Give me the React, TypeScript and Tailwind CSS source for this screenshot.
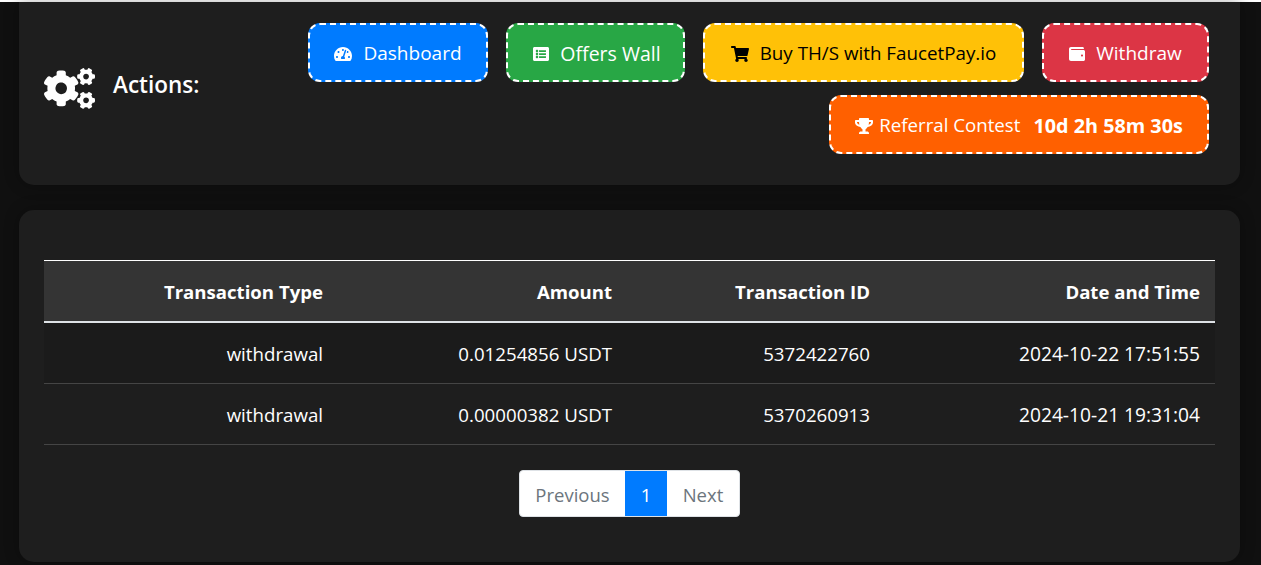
import { FaCogs, FaListAlt, FaShoppingCart, FaTachometerAlt, FaTrophy, FaWallet } from 'react-icons/fa';
import type { ReactNode } from 'react';

const rows = [
  { type: 'withdrawal', amount: '0.01254856 USDT', id: '5372422760', date: '2024-10-22 17:51:55', first: true },
  { type: 'withdrawal', amount: '0.00000382 USDT', id: '5370260913', date: '2024-10-21 19:31:04', first: false },
];

const ActionButton = ({ className, children }: { className: string; children: ReactNode }) => (
  <a className={`flex h-[59px] items-center justify-center rounded-[12px] border-2 border-dashed border-white pt-[2px] ${className}`}>
    {children}
  </a>
);

export default function App() {
  return (
    <div className="h-[565px] overflow-hidden bg-[#101010] font-['Open_Sans','Noto_Sans',sans-serif] text-[19px] text-white">
      <div className="h-[2px] bg-white" />
      <div className="mr-[21px] ml-[19px] flex h-[183px] rounded-b-[15px] bg-[#1e1e1e] pr-[31px] pl-[25px] shadow-[0_0_15px_rgba(0,0,0,0.3)]">
        <div className="flex w-[240px] shrink-0 items-center pb-[18px]">
          <FaCogs className="mt-[8px] text-[51px]" />
          <span className="ml-[18px] text-[22.5px] font-semibold">Actions:</span>
        </div>
        <div className="flex flex-1 flex-wrap content-start justify-end gap-x-[18px] gap-y-[13px] pt-[21px]">
          <ActionButton className="w-[180px] bg-[#007bff]">
            <FaTachometerAlt className="mr-[11px] text-[18px]" />
            Dashboard
          </ActionButton>
          <ActionButton className="w-[179px] bg-[#28a745]">
            <FaListAlt className="mr-[11px] ml-[3px] text-[16px]" />
            <span className="text-[19.5px]">Offers Wall</span>
          </ActionButton>
          <ActionButton className="w-[321px] bg-[#ffc107] text-black">
            <FaShoppingCart className="mr-[11px] text-[18px]" />
            <span className="text-[18.8px]">Buy TH/S with FaucetPay.io</span>
          </ActionButton>
          <ActionButton className="w-[167px] bg-[#dc3545]">
            <FaWallet className="mr-[11px] text-[16px]" />
            Withdraw
          </ActionButton>
          <ActionButton className="w-[380px] bg-[#ff6000]">
            <FaTrophy className="mr-[6px] text-[18px]" />
            <span className="text-[18.7px]">Referral Contest</span>
            <b className="ml-[13px] text-[19.8px] font-bold">10d 2h 58m 30s</b>
          </ActionButton>
        </div>
      </div>
      <div className="mt-[25px] mr-[21px] ml-[19px] flex h-[352px] flex-col rounded-[15px] bg-[#1e1e1e] px-[25px] pt-[50px] shadow-[0_0_15px_rgba(0,0,0,0.3)]">
        <table className="w-full border-collapse text-right text-[18.7px]">
          <thead>
            <tr className="h-[61px] border-y border-t-white border-b-2 border-b-[#dee2e6] bg-[#343434] text-[18.6px] font-bold">
              <th className="w-[294px] px-[15px] pt-[3px]">Transaction Type</th>
              <th className="w-[289px] px-[15px] pt-[3px]">Amount</th>
              <th className="w-[258px] px-[15px] pt-[3px]">Transaction ID</th>
              <th className="px-[15px] pt-[3px]">Date and Time</th>
            </tr>
          </thead>
          <tbody>
            {rows.map((row) => (
              <tr
                key={row.id}
                className={`border-b border-[#454545] ${row.first ? 'h-[62px] bg-[#1b1b1b]' : 'h-[61px]'}`}
              >
                <td className="px-[15px] pt-[3px]">{row.type}</td>
                <td className="px-[15px] pt-[3px]">{row.amount}</td>
                <td className="px-[15px] pt-[3px]">{row.id}</td>
                <td className="px-[15px] pt-[3px] text-[19.2px]">{row.date}</td>
              </tr>
            ))}
          </tbody>
        </table>
        <div className="mt-[25px] flex justify-center">
          <div className="flex h-[47px] items-stretch overflow-hidden rounded-[4px] border border-[#dee2e6] bg-white text-[18.5px] text-[#6c757d]">
            <span className="flex w-[105px] items-center justify-center pt-[2px]">Previous</span>
            <span className="flex w-[42px] items-center justify-center bg-[#007bff] pt-[2px] text-white">1</span>
            <span className="flex w-[72px] items-center justify-center pt-[2px]">Next</span>
          </div>
        </div>
      </div>
    </div>
  );
}
